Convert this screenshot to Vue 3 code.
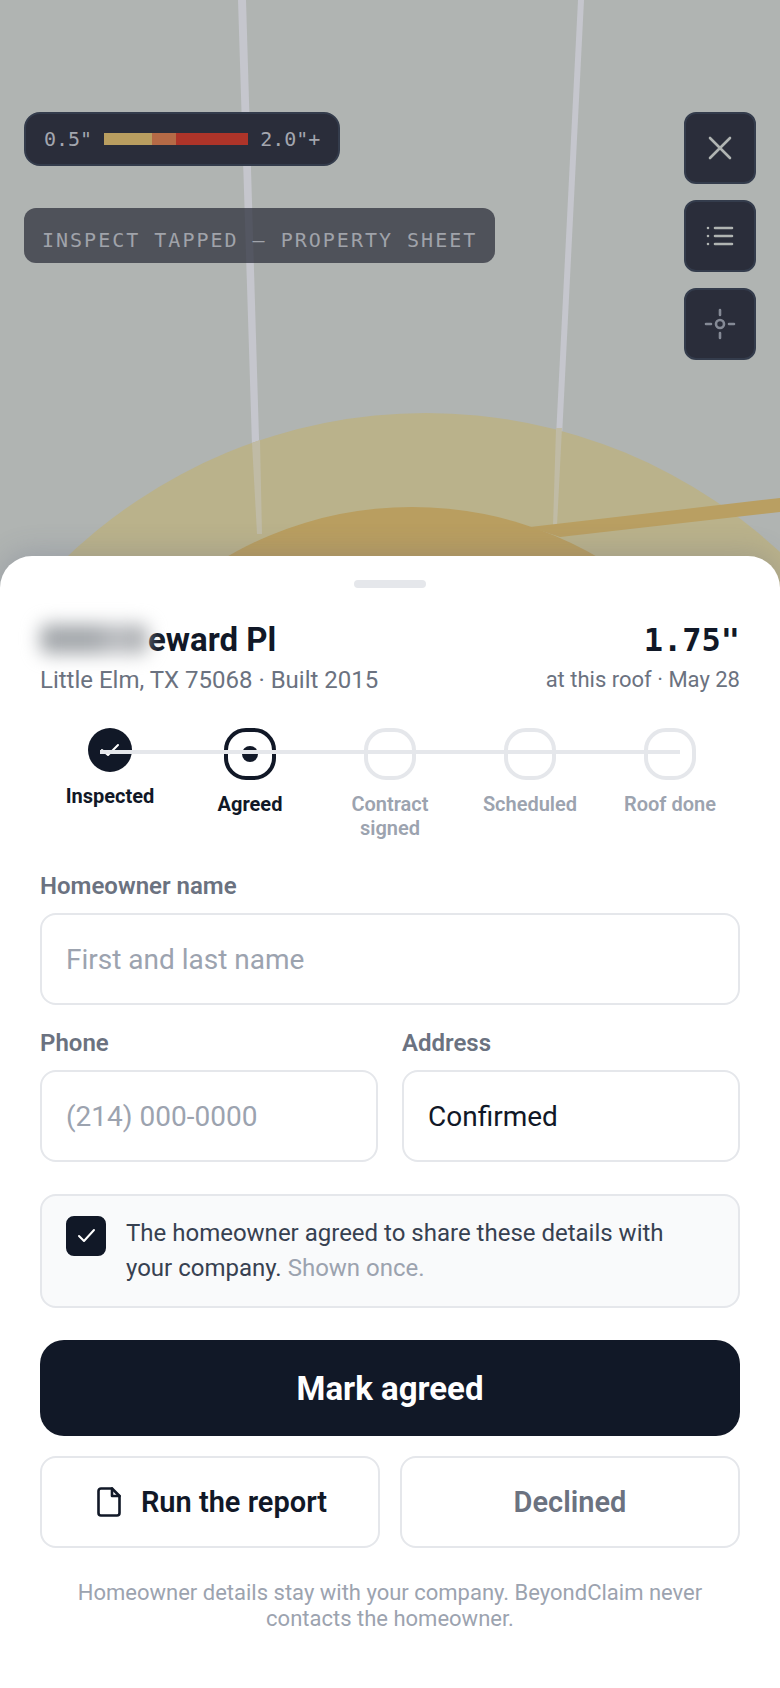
<template>
  <main class="screen">
    <svg class="map" viewBox="0 0 780 640" preserveAspectRatio="xMidYMin slice" aria-hidden="true">
      <rect width="780" height="640" fill="#b0b4b2" />
      <path d="M238 0h8L262 540h-7z" fill="#c5c6cd" />
      <path d="M578 0h6L557 536h-6z" fill="#c5c6cd" />
      <circle cx="426" cy="933" r="520" fill="#bab28b" />
      <path d="M252 443l8-3L262 534h-5z" fill="#c0bba5" />
      <path d="M556 428h6L557 526h-4z" fill="#c0bba5" />
      <path d="M530 527L780 498v14L560 537z" fill="#b99f62" />
      <circle cx="412" cy="877" r="370" fill="#b99e60" />
    </svg>

    <section class="map-overlay">
      <div class="map-info">
        <div class="scale">
          <span>0.5"</span>
          <span class="scale-bar"></span>
          <span>2.0"+</span>
        </div>
        <p class="caption">INSPECT TAPPED — PROPERTY SHEET</p>
      </div>
      <div class="map-tools">
        <button type="button" class="tool" aria-label="Close">
          <svg viewBox="0 0 36 36"><path d="M8 8l20 20M28 8L8 28" /></svg>
        </button>
        <button type="button" class="tool" aria-label="List">
          <svg viewBox="0 0 36 36"><path d="M13 10h17M13 18h17M13 26h17M6 10h0M6 18h0M6 26h0" /></svg>
        </button>
        <button type="button" class="tool muted" aria-label="Locate">
          <svg viewBox="0 0 36 36">
            <circle cx="18" cy="18" r="4" />
            <path d="M18 4v5M18 27v5M4 18h5M27 18h5" />
          </svg>
        </button>
      </div>
    </section>

    <form class="sheet" @submit.prevent>
      <div class="handle"></div>

      <header class="sheet-header">
        <div>
          <h1 class="title"><span class="redacted" aria-hidden="true"></span>eward Pl</h1>
          <p class="subtitle">Little Elm, TX 75068 · Built 2015</p>
        </div>
        <div class="reading">
          <p class="size">1.75"</p>
          <p class="subtitle">at this roof · May 28</p>
        </div>
      </header>

      <ol class="steps">
        <li v-for="step in steps" :key="step.label" class="step" :class="step.state">
          <span class="marker">
            <svg v-if="step.state === 'done'" viewBox="0 0 24 24"><path d="M4 12l6 5L20 7" /></svg>
          </span>
          <span class="step-label">{{ step.label }}</span>
        </li>
      </ol>

      <div class="fields">
        <div class="field wide">
          <label for="name">Homeowner name</label>
          <input id="name" v-model="name" type="text" placeholder="First and last name" />
        </div>
        <div class="field">
          <label for="phone">Phone</label>
          <input id="phone" v-model="phone" type="tel" placeholder="(214) 000-0000" />
        </div>
        <div class="field">
          <label for="address">Address</label>
          <input id="address" v-model="address" type="text" />
        </div>
      </div>

      <label class="consent" for="consent">
        <span class="check">
          <input id="consent" v-model="consent" type="checkbox" />
          <svg v-if="consent" viewBox="0 0 40 40"><path d="M13 20l5 5 10-11" /></svg>
        </span>
        <span>The homeowner agreed to share these details with your company. <span class="hint">Shown once.</span></span>
      </label>

      <button type="submit" class="primary">Mark agreed</button>
      <div class="actions">
        <button type="button" class="secondary">
          <svg viewBox="0 0 32 32">
            <path d="M19 2.5H8a2.5 2.5 0 0 0-2.5 2.5v22A2.5 2.5 0 0 0 8 29.500h16a2.500 2.500 0 0 0 2.500-2.500V10z" />
            <path d="M19 2.500V10h7.500" />
          </svg>
          Run the report
        </button>
        <button type="button" class="secondary declined">Declined</button>
      </div>

      <p class="footnote">Homeowner details stay with your company. BeyondClaim never contacts the homeowner.</p>
    </form>
  </main>
</template>

<script setup>
import { ref } from 'vue';

const steps = [
  { label: 'Inspected', state: 'done' },
  { label: 'Agreed', state: 'current' },
  { label: 'Contract signed', state: 'upcoming' },
  { label: 'Scheduled', state: 'upcoming' },
  { label: 'Roof done', state: 'upcoming' }
];

const name = ref('');
const phone = ref('');
const address = ref('Confirmed');
const consent = ref(true);
</script>

<style>
body {
  margin: 0;
  background: #b0b4b2;
}
</style>

<style scoped>
* {
  box-sizing: border-box;
}

.screen {
  position: relative;
  display: flex;
  flex-direction: column;
  min-height: 100vh;
  overflow: hidden;
  font-family: Roboto, "Liberation Sans", sans-serif;
  color: #111827;
}

.map {
  position: absolute;
  top: 0;
  left: 0;
  width: 100%;
  height: 640px;
}

.map-overlay {
  position: relative;
  display: flex;
  justify-content: space-between;
  align-items: flex-start;
  padding: 112px 24px 196px;
}

.map-info {
  display: flex;
  flex-direction: column;
  align-items: flex-start;
  gap: 42px;
}

.scale,
.caption {
  font-family: "DejaVu Sans Mono", monospace;
  font-size: 20px;
  line-height: 24px;
}

.scale {
  display: flex;
  align-items: center;
  gap: 12px;
  padding: 13px 18px;
  color: #a3a6af;
  background: #2a2d3a;
  border: 2px solid #343c4c;
  border-radius: 16px;
}

.scale-bar {
  width: 144px;
  height: 12px;
  background: linear-gradient(90deg, #b99e60 0 48px, #b56a46 48px 72px, #ae3429 72px);
}

.caption {
  margin: 0;
  padding: 20px 18px 11px;
  letter-spacing: 2px;
  color: #a0a3aa;
  background: rgba(42, 45, 58, 0.73);
  border-radius: 12px;
}

.map-tools {
  display: flex;
  flex-direction: column;
  gap: 16px;
}

.tool {
  display: flex;
  align-items: center;
  justify-content: center;
  width: 72px;
  height: 72px;
  padding: 0;
  color: #b0b4b2;
  background: #2a2d3a;
  border: 2px solid #343c4c;
  border-radius: 12px;
}

.tool.muted {
  color: #858a96;
}

.tool svg {
  width: 36px;
  height: 36px;
}

svg path,
.tool circle {
  stroke-linecap: round;
  stroke-linejoin: round;
}

.tool path,
.tool circle {
  fill: none;
  stroke: currentColor;
  stroke-width: 2.6;
}

.sheet {
  position: relative;
  flex: 1;
  display: flex;
  flex-direction: column;
  padding: 24px 40px 56px;
  background: #fff;
  border-radius: 32px 32px 0 0;
  box-shadow: 0 -4px 28px rgba(85, 90, 125, 0.24);
}

.handle {
  align-self: center;
  width: 72px;
  height: 8px;
  border-radius: 4px;
  background: #e5e7eb;
}

.sheet-header {
  display: flex;
  justify-content: space-between;
  gap: 24px;
  margin: 32px 0 30px;
}

.title,
.size {
  margin: 0 0 2px;
  font-weight: 700;
  line-height: 40px;
}

.title {
  font-size: 33px;
}

.redacted {
  display: inline-block;
  width: 108px;
  height: 30px;
  vertical-align: -3px;
  border-radius: 8px;
  background: linear-gradient(90deg, #a4a8ac 50%, #bcbec2 70%, #aaadb0);
  filter: blur(9px);
}

.size {
  font-family: "DejaVu Sans Mono", monospace;
  font-size: 32px;
}

.reading {
  text-align: right;
}

.subtitle {
  margin: 0;
  font-size: 24px;
  line-height: 36px;
  color: #6b7280;
}

.reading .subtitle {
  font-size: 22px;
}

.steps {
  position: relative;
  display: grid;
  grid-template-columns: repeat(5, 1fr);
  margin: 0 0 32px;
  padding: 0;
  list-style: none;
}

.steps::after {
  content: "";
  position: absolute;
  top: 22px;
  left: 60px;
  right: 60px;
  height: 4px;
  background: #e5e7eb;
}

.step {
  display: flex;
  flex-direction: column;
  align-items: center;
  gap: 12px;
  padding: 0 16px;
  text-align: center;
  color: #9ca3af;
}

.marker {
  display: flex;
  align-items: center;
  justify-content: center;
  width: 52px;
  height: 52px;
  border: 4px solid #e5e7eb;
  border-radius: 22px;
}

.step.done,
.step.current {
  color: #111827;
}

.done .marker {
  width: 44px;
  height: 44px;
  border: 0;
  background: #111827;
}

.done svg {
  width: 24px;
  height: 24px;
  fill: none;
  stroke: #fff;
  stroke-width: 2;
}

.current .marker {
  border-color: #111827;
}

.current .marker::before {
  content: "";
  width: 16px;
  height: 16px;
  border-radius: 50%;
  background: #111827;
}

.step-label {
  font-size: 20px;
  font-weight: 600;
  line-height: 24px;
}

.done .step-label,
.current .step-label {
  font-weight: 700;
}

.fields {
  display: grid;
  grid-template-columns: 1fr 1fr;
  gap: 24px;
}

.field {
  display: flex;
  flex-direction: column;
  gap: 12px;
  min-width: 0;
}

.wide {
  grid-column: 1 / -1;
}

.field label {
  font-size: 24px;
  font-weight: 600;
  line-height: 29px;
  color: #6b7280;
}

.field input {
  width: 100%;
  height: 92px;
  padding: 0 24px;
  font: inherit;
  font-size: 28px;
  color: #111827;
  background: #fff;
  border: 2px solid #e5e7eb;
  border-radius: 16px;
}

.field input::placeholder {
  color: #9ca3af;
  opacity: 1;
}

.consent {
  display: flex;
  align-items: flex-start;
  gap: 20px;
  margin: 32px 0;
  padding: 20px 24px;
  font-size: 24px;
  line-height: 35px;
  color: #374151;
  background: #f9fafb;
  border: 2px solid #e5e7eb;
  border-radius: 16px;
}

.hint {
  color: #9ca3af;
}

.check {
  position: relative;
  flex: none;
  width: 40px;
  height: 40px;
}

.check input {
  display: block;
  width: 40px;
  height: 40px;
  margin: 0;
  appearance: none;
  border: 2px solid #111827;
  border-radius: 8px;
}

.check input:checked {
  background: #111827;
}

.check svg {
  position: absolute;
  inset: 0;
  fill: none;
  stroke: #fff;
  stroke-width: 2;
  pointer-events: none;
}

.primary,
.secondary {
  font-family: inherit;
  cursor: pointer;
}

.primary {
  height: 96px;
  font-size: 33px;
  font-weight: 700;
  color: #fff;
  background: #111827;
  border: 0;
  border-radius: 24px;
}

.actions {
  display: grid;
  grid-template-columns: 1fr 1fr;
  gap: 20px;
  margin: 20px 0 32px;
}

.secondary {
  display: flex;
  align-items: center;
  justify-content: center;
  gap: 16px;
  height: 92px;
  font-size: 29px;
  font-weight: 600;
  color: #111827;
  background: #fff;
  border: 2px solid #e5e7eb;
  border-radius: 16px;
}

.secondary svg {
  width: 32px;
  height: 32px;
  fill: none;
  stroke: currentColor;
  stroke-width: 2.6;
}

.declined {
  color: #6b7280;
}

.footnote {
  margin: 0;
  font-size: 22px;
  line-height: 26px;
  text-align: center;
  color: #9ca3af;
}
</style>
